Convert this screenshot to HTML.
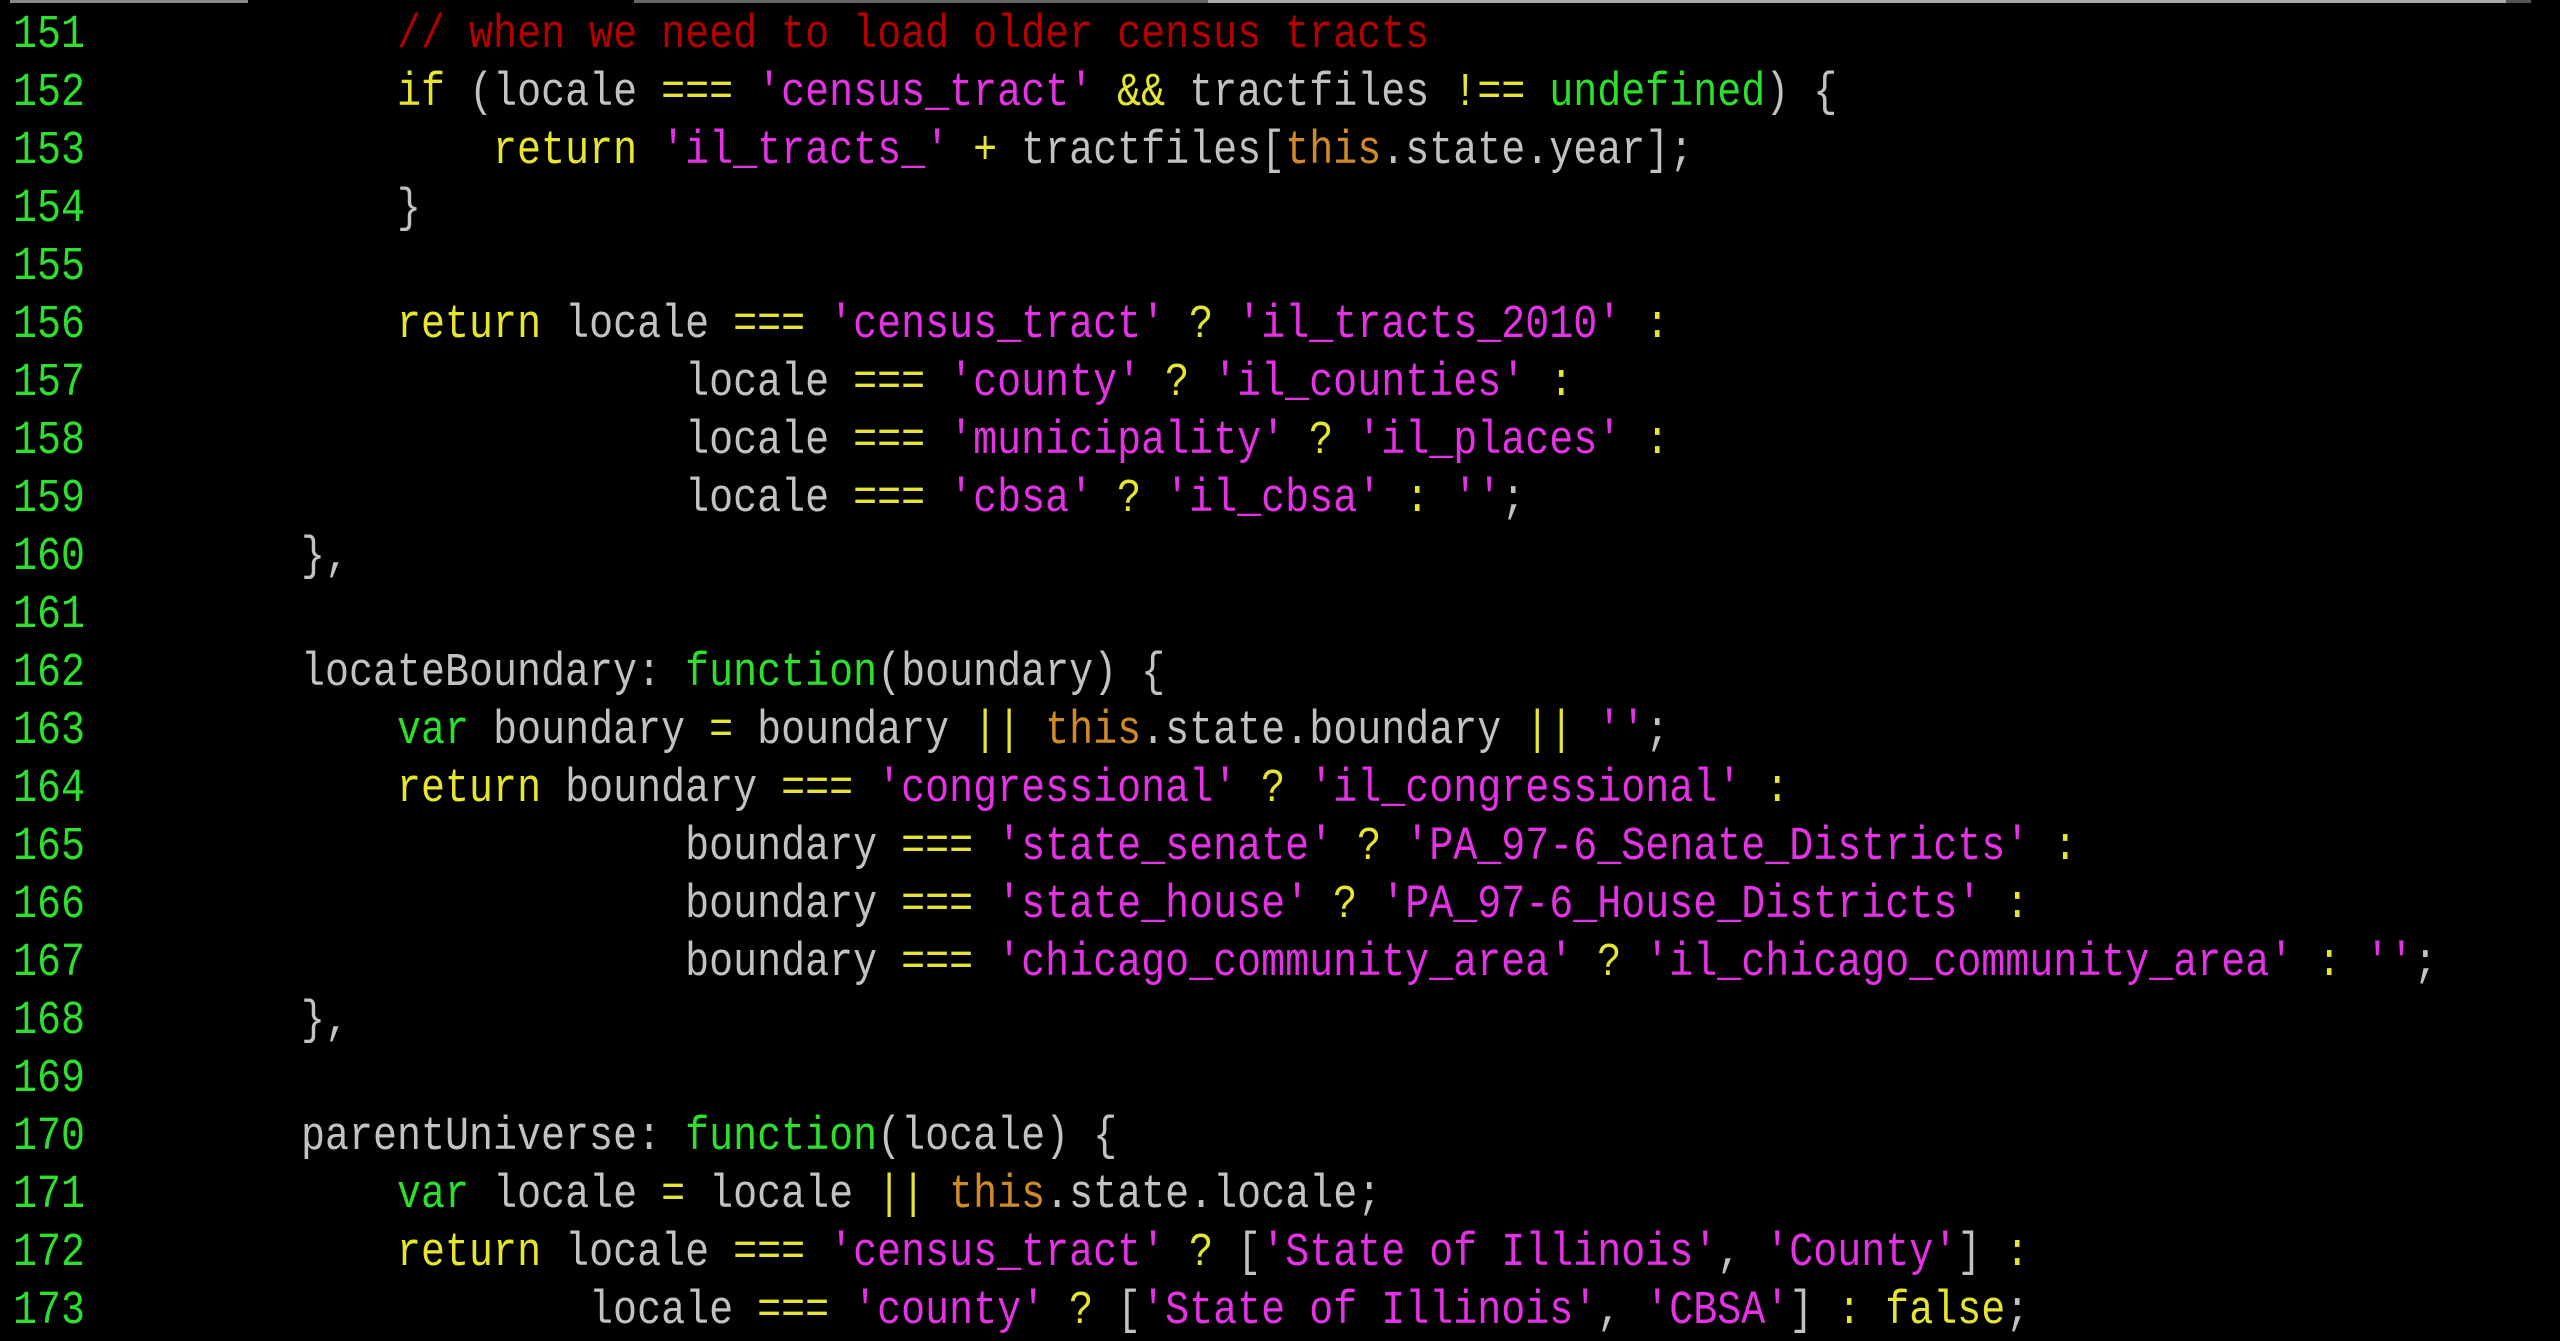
<!DOCTYPE html>
<html><head><meta charset="utf-8"><style>
html,body{margin:0;padding:0;background:#000;width:2560px;height:1334px;overflow:hidden}
.bar{position:absolute;top:0;height:3px}
pre{position:absolute;left:13px;top:7px;margin:0;font-family:"Liberation Mono","DejaVu Sans Mono",monospace;font-size:47px;line-height:58px;color:#c2c2c2;transform:scaleX(0.851);transform-origin:0 0}
.n{color:#2ee02e}.k{color:#e6e632}.s{color:#e632e6}.g{color:#2ee02e}.t{color:#d08a2a}.c{color:#b40000}
</style></head><body>
<div class="bar" style="left:10px;width:238px;background:#888"></div>
<div class="bar" style="left:634px;width:574px;background:#666"></div>
<div class="bar" style="left:1208px;width:1298px;background:#aaa"></div>
<div class="bar" style="left:2506px;width:25px;background:#555"></div>
<pre><span class="n">151</span>             <span class="c">// when we need to load older census tracts</span>
<span class="n">152</span>             <span class="k">if</span> (locale <span class="k">===</span> <span class="s">'census_tract'</span> <span class="k">&amp;&amp;</span> tractfiles <span class="k">!==</span> <span class="g">undefined</span>) {
<span class="n">153</span>                 <span class="k">return</span> <span class="s">'il_tracts_'</span> <span class="k">+</span> tractfiles[<span class="t">this</span>.state.year];
<span class="n">154</span>             }
<span class="n">155</span>
<span class="n">156</span>             <span class="k">return</span> locale <span class="k">===</span> <span class="s">'census_tract'</span> <span class="k">?</span> <span class="s">'il_tracts_2010'</span> <span class="k">:</span>
<span class="n">157</span>                         locale <span class="k">===</span> <span class="s">'county'</span> <span class="k">?</span> <span class="s">'il_counties'</span> <span class="k">:</span>
<span class="n">158</span>                         locale <span class="k">===</span> <span class="s">'municipality'</span> <span class="k">?</span> <span class="s">'il_places'</span> <span class="k">:</span>
<span class="n">159</span>                         locale <span class="k">===</span> <span class="s">'cbsa'</span> <span class="k">?</span> <span class="s">'il_cbsa'</span> <span class="k">:</span> <span class="s">''</span>;
<span class="n">160</span>         },
<span class="n">161</span>
<span class="n">162</span>         locateBoundary: <span class="g">function</span>(boundary) {
<span class="n">163</span>             <span class="g">var</span> boundary <span class="k">=</span> boundary <span class="k">||</span> <span class="t">this</span>.state.boundary <span class="k">||</span> <span class="s">''</span>;
<span class="n">164</span>             <span class="k">return</span> boundary <span class="k">===</span> <span class="s">'congressional'</span> <span class="k">?</span> <span class="s">'il_congressional'</span> <span class="k">:</span>
<span class="n">165</span>                         boundary <span class="k">===</span> <span class="s">'state_senate'</span> <span class="k">?</span> <span class="s">'PA_97-6_Senate_Districts'</span> <span class="k">:</span>
<span class="n">166</span>                         boundary <span class="k">===</span> <span class="s">'state_house'</span> <span class="k">?</span> <span class="s">'PA_97-6_House_Districts'</span> <span class="k">:</span>
<span class="n">167</span>                         boundary <span class="k">===</span> <span class="s">'chicago_community_area'</span> <span class="k">?</span> <span class="s">'il_chicago_community_area'</span> <span class="k">:</span> <span class="s">''</span>;
<span class="n">168</span>         },
<span class="n">169</span>
<span class="n">170</span>         parentUniverse: <span class="g">function</span>(locale) {
<span class="n">171</span>             <span class="g">var</span> locale <span class="k">=</span> locale <span class="k">||</span> <span class="t">this</span>.state.locale;
<span class="n">172</span>             <span class="k">return</span> locale <span class="k">===</span> <span class="s">'census_tract'</span> <span class="k">?</span> [<span class="s">'State of Illinois'</span>, <span class="s">'County'</span>] <span class="k">:</span>
<span class="n">173</span>                     locale <span class="k">===</span> <span class="s">'county'</span> <span class="k">?</span> [<span class="s">'State of Illinois'</span>, <span class="s">'CBSA'</span>] <span class="k">:</span> <span class="k">false</span>;
</pre>
</body></html>
